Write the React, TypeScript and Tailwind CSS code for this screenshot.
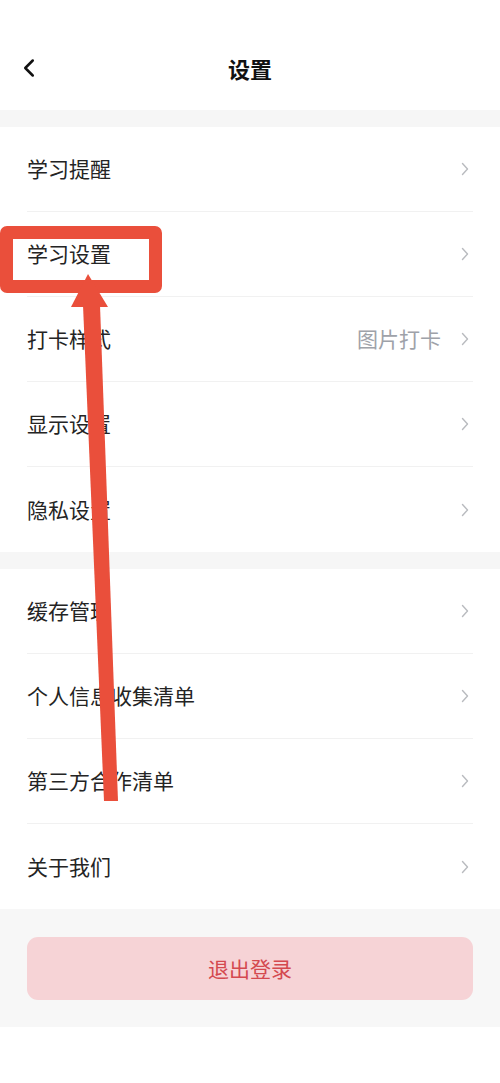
import { ChevronLeft } from 'lucide-react'

const SECTION_ONE = [
  { label: '学习提醒' },
  { label: '学习设置' },
  { label: '打卡样式', value: '图片打卡' },
  { label: '显示设置' },
  { label: '隐私设置' },
]

const SECTION_TWO = [
  { label: '缓存管理' },
  { label: '个人信息收集清单' },
  { label: '第三方合作清单' },
  { label: '关于我们' },
]

function Arrow() {
  return (
    <svg width="8" height="14" viewBox="0 0 8 14" fill="none" className="shrink-0 mr-[4px]">
      <path d="M1.5 1.5 L6.5 7 L1.5 12.5" stroke="#b9bbbf" strokeWidth="1.4" strokeLinecap="round" strokeLinejoin="round" />
    </svg>
  )
}

function Row({ label, value, last }: { label: string; value?: string; last?: boolean }) {
  return (
    <div className="px-[27px]">
      <div className={`h-[85px] flex items-center ${last ? '' : 'border-b border-[#f1f1f1]'}`}>
        <span className="flex-1 text-[21px] text-[#242424]">{label}</span>
        {value && <span className="text-[21px] text-[#9ea2a9] mr-[20px]">{value}</span>}
        <Arrow />
      </div>
    </div>
  )
}

export default function App() {
  return (
    <div
      className="relative w-[500px] h-[1083px] bg-white overflow-hidden"
      style={{ fontFamily: '"Noto Sans CJK SC", "Noto Sans", sans-serif' }}
    >
      {/* Header */}
      <div className="h-[110px] flex items-end pb-[22px] relative">
        <div className="w-full flex items-center justify-center h-[40px]">
          <ChevronLeft className="absolute left-[14px] w-[30px] h-[30px] text-[#111]" strokeWidth={2} />
          <h1 className="text-[22px] font-bold text-[#111]">设置</h1>
        </div>
      </div>

      <div className="h-[17px] bg-[#f6f6f6]" />
      {SECTION_ONE.map((r, i) => (
        <Row key={r.label} label={r.label} value={r.value} last={i === SECTION_ONE.length - 1} />
      ))}

      <div className="h-[17px] bg-[#f6f6f6]" />
      {SECTION_TWO.map((r, i) => (
        <Row key={r.label} label={r.label} last={i === SECTION_TWO.length - 1} />
      ))}

      {/* Logout */}
      <div className="bg-[#f7f7f7] px-[27px] pt-[28px] pb-[27px]">
        <button className="w-full h-[63px] rounded-[11px] bg-[#f6d3d6] text-[21px] text-[#d4494f]">
          退出登录
        </button>
      </div>

      {/* annotation overlay */}
      <div className="absolute left-0 top-[226px] w-[162px] h-[67px] border-[13px] border-[#ea4f3b] rounded-[7px]" />
      <svg className="absolute inset-0 pointer-events-none" width="500" height="1083" viewBox="0 0 500 1083">
        <polygon points="88,274 71,307 108,307" fill="#ea4f3b" />
        <polygon points="83,305 100,305 118,801 104,801" fill="#ea4f3b" />
      </svg>
    </div>
  )
}
